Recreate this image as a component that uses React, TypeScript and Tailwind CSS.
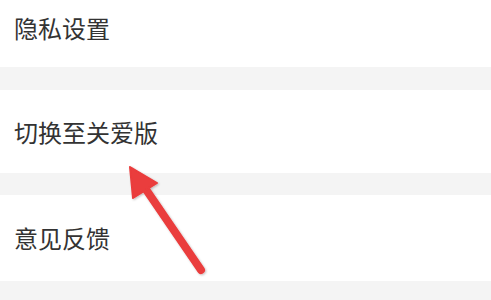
const rows = ['隐私设置', '切换至关爱版', '意见反馈'];

function Arrow() {
  return (
    <svg
      className="absolute left-0 top-0 pointer-events-none"
      width="491"
      height="300"
      viewBox="0 0 491 300"
    >
      <defs>
        <filter id="sh" x="-20%" y="-20%" width="140%" height="140%">
          <feDropShadow dx="1" dy="1" stdDeviation="1.2" floodColor="#000" floodOpacity="0.25" />
        </filter>
      </defs>
      <g filter="url(#sh)">
        <line x1="145" y1="188" x2="201" y2="270" stroke="#ea3c3c" strokeWidth="8" strokeLinecap="round" />
        <polygon points="130,167 157,183 133,198" fill="#ea3c3c" stroke="#ea3c3c" strokeWidth="2" strokeLinejoin="round" />
      </g>
    </svg>
  );
}

export default function App() {
  return (
    <div
      className="relative w-[491px] h-[300px] overflow-hidden bg-[#f4f4f4]"
      style={{ fontFamily: '"Noto Sans CJK SC", "Noto Sans", sans-serif' }}
    >
      <div className="flex flex-col">
        <div className="h-[67px] bg-white flex items-center pl-[14px] pb-[12px] text-[24px] text-[#333]">
          {rows[0]}
        </div>
        <div className="h-[23px]" />
        <div className="h-[83px] bg-white flex items-center pl-[14px] text-[24px] text-[#333]">
          {rows[1]}
        </div>
        <div className="h-[22px]" />
        <div className="h-[86px] bg-white flex items-center pl-[14px] text-[24px] text-[#333]">
          {rows[2]}
        </div>
      </div>
      <Arrow />
    </div>
  );
}
